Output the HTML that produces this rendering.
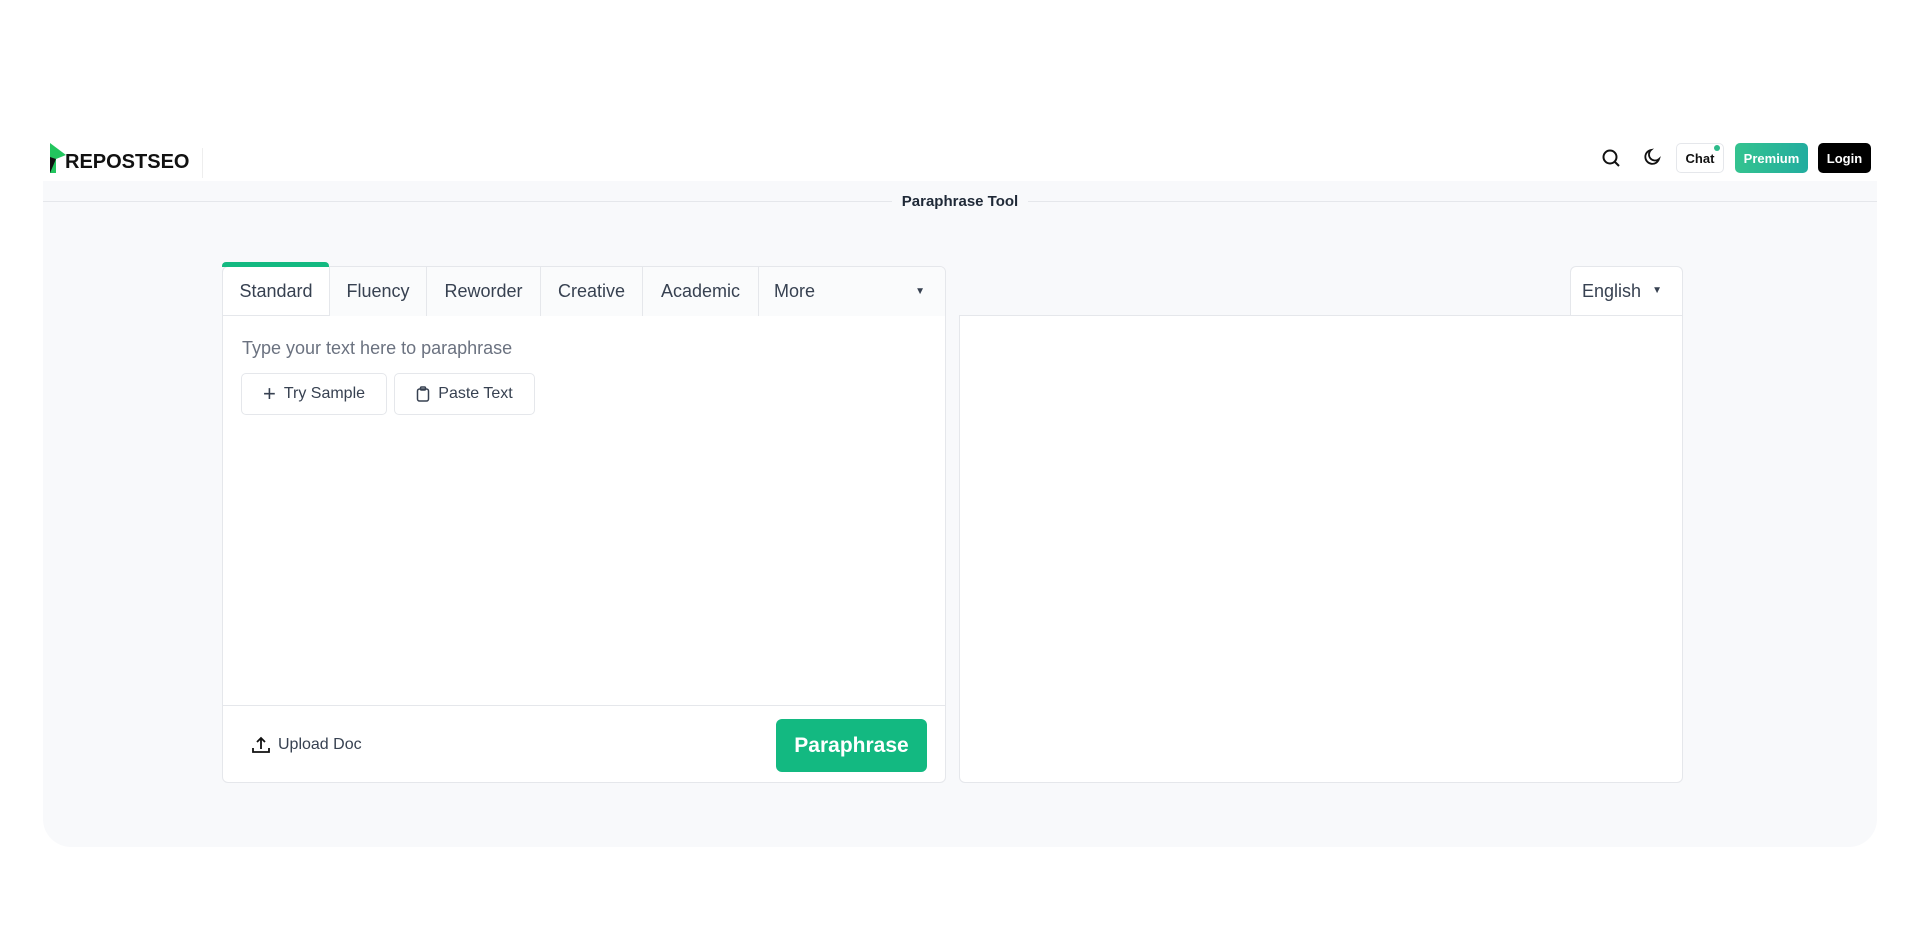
<!DOCTYPE html>
<html><head><meta charset="utf-8"><style>
*{box-sizing:border-box;margin:0;padding:0}
body{width:1920px;height:951px;background:#fff;font-family:"Liberation Sans",sans-serif;position:relative;overflow:hidden;color:#374151}
.abs{position:absolute}
.panel{left:43px;top:181px;width:1834px;height:666px;background:#f8f9fb;border-radius:0 0 28px 28px}
.hline{left:43px;top:201px;width:1834px;height:1px;background:#e5e7eb}
.title{left:0;width:1920px;top:193px;text-align:center}
.title span{background:#f8f9fb;padding:0 10px;font-weight:bold;font-size:15px;color:#1f2937}
.card{background:#fff;border:1px solid #e5e7eb;border-radius:6px}
.tab{position:absolute;top:0;height:49px;line-height:49px;font-size:18px;color:#374151;text-align:center;border-right:1px solid #e5e7eb}
.btn{position:absolute;border:1px solid #e5e7eb;border-radius:5px;background:#fff;font-size:16px;color:#374151;display:flex;align-items:center;justify-content:center;gap:8px}
.hb{position:absolute;top:143px;height:30px;border-radius:5px;font-size:13px;font-weight:bold;display:flex;align-items:center;justify-content:center}
</style></head><body>
<div class="abs panel"></div>
<div class="abs hline"></div>
<div class="abs title"><span>Paraphrase Tool</span></div>

<!-- logo -->
<svg class="abs" style="left:48px;top:143px" width="20" height="31" viewBox="0 0 20 31"><path d="M2 0 L18 12 L8 16 L8 30 L2 30 Z" fill="#22c55e"/><path d="M2 14 L8 16 L2 30Z" fill="#111"/></svg>
<div class="abs" style="left:65px;top:151px;font-size:20px;font-weight:bold;color:#111;line-height:22px">REPOSTSEO</div>
<div class="abs" style="left:202px;top:148px;width:1px;height:30px;background:#eee"></div>

<!-- header right -->
<svg class="abs" style="left:1601px;top:148px" width="20" height="20" viewBox="0 0 20 20" fill="none" stroke="#111" stroke-width="2"><circle cx="9" cy="9" r="6.5"/><path d="M14 14l4 4"/></svg>
<svg class="abs" style="left:1641px;top:148px" width="20" height="20" viewBox="0 0 20 20" fill="none" stroke="#111" stroke-width="1.8"><path d="M10 2a7 7 0 1 0 8 9A6 6 0 0 1 10 2z"/></svg>
<div class="hb" style="left:1676px;width:48px;border:1px solid #e5e7eb;color:#111;background:#fff">Chat</div>
<div class="abs" style="left:1714px;top:145px;width:6px;height:6px;border-radius:50%;background:#2dbb8a"></div>
<div class="hb" style="left:1735px;width:73px;background:linear-gradient(90deg,#34c38f,#22ad9f);color:#fff">Premium</div>
<div class="hb" style="left:1818px;width:53px;background:#000;color:#fff">Login</div>

<!-- left card -->
<div class="abs card" style="left:222px;top:266px;width:724px;height:517px;overflow:hidden">
  <div class="abs" style="left:0;top:0;width:724px;height:49px;border-bottom:1px solid #e5e7eb"></div>
  <div class="tab" style="left:0;width:107px">Standard</div>
  <div class="tab" style="left:107px;width:97px;background:#fafbfc">Fluency</div>
  <div class="tab" style="left:204px;width:114px;background:#fafbfc">Reworder</div>
  <div class="tab" style="left:318px;width:102px;background:#fafbfc">Creative</div>
  <div class="tab" style="left:420px;width:116px;background:#fafbfc">Academic</div>
  <div class="tab" style="left:536px;width:188px;background:#fafbfc;border-right:none;text-align:left;padding-left:15px">More<span style="position:absolute;right:22px;top:0;font-size:10px">▼</span></div>
  <div class="abs" style="left:19px;top:71px;font-size:18px;color:#6b7280">Type your text here to paraphrase</div>
  <div class="btn" style="left:18px;top:106px;width:146px;height:42px"><span style="font-size:22px;font-weight:300">+</span>Try Sample</div>
  <div class="btn" style="left:171px;top:106px;width:141px;height:42px"><svg width="14" height="16" viewBox="0 0 14 16" fill="none" stroke="#374151" stroke-width="1.5"><rect x="1.5" y="3" width="11" height="12" rx="2"/><rect x="4.5" y="1" width="5" height="3" rx="1"/></svg>Paste Text</div>
  <div class="abs" style="left:0;top:438px;width:724px;height:1px;background:#e5e7eb"></div>
  <svg class="abs" style="left:28px;top:468px" width="20" height="20" viewBox="0 0 20 20" fill="none" stroke="#111" stroke-width="1.8"><path d="M10 14V3M6 7l4-4 4 4M2 13v4h16v-4"/></svg>
  <div class="abs" style="left:55px;top:469px;font-size:16px;color:#374151">Upload Doc</div>
  <div class="abs" style="left:553px;top:452px;width:151px;height:53px;background:#13b981;border-radius:6px;color:#fff;font-size:21px;font-weight:bold;display:flex;align-items:center;justify-content:center">Paraphrase</div>
</div>
<div class="abs" style="left:222px;top:262px;width:107px;height:5px;background:#13b981;border-radius:4px 4px 0 0"></div>

<!-- right -->
<div class="abs card" style="left:1570px;top:266px;width:113px;height:52px;border-bottom:none;border-radius:6px 6px 0 0;font-size:18px;line-height:48px;padding-left:11px">English<span style="position:absolute;right:20px;font-size:10px">▼</span></div>
<div class="abs card" style="left:959px;top:315px;width:724px;height:468px;border-radius:0 0 6px 6px"></div>
</body></html>
